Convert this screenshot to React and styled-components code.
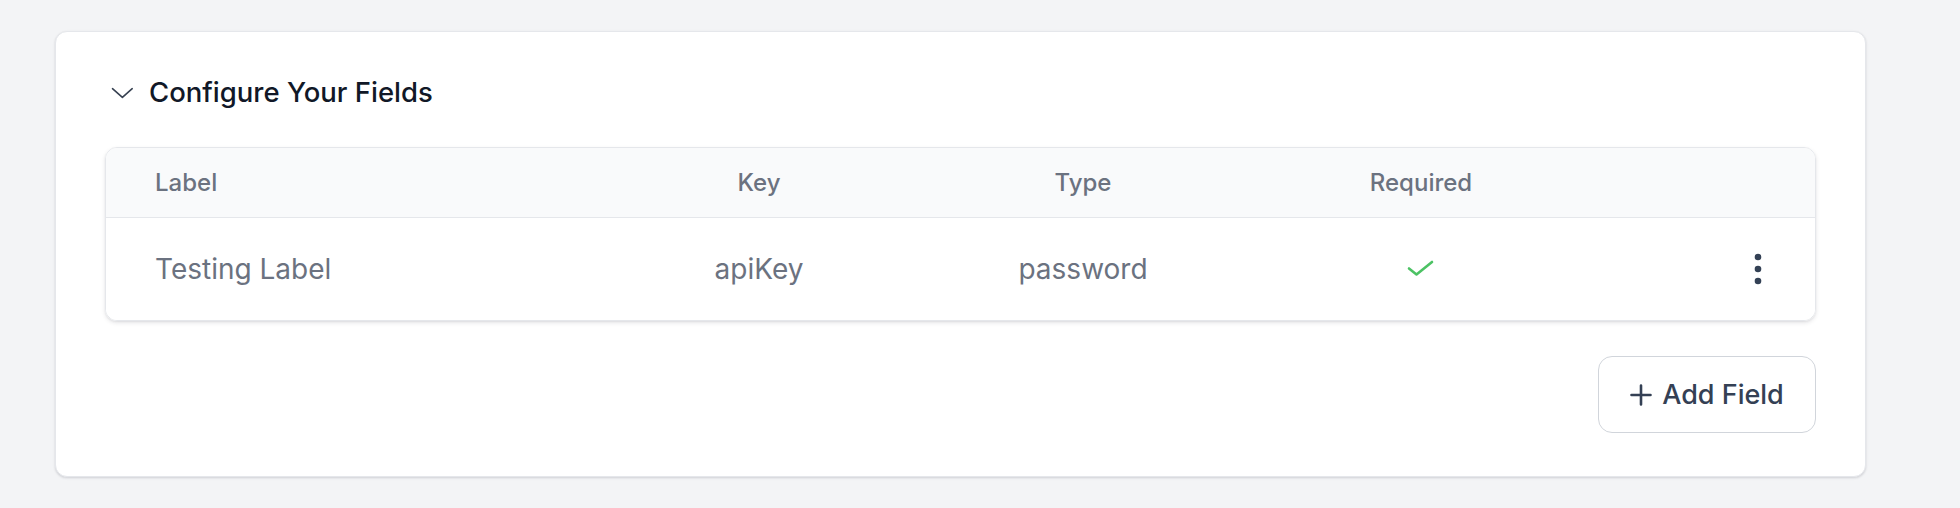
import styled, { createGlobalStyle } from "styled-components";

const GlobalStyle = createGlobalStyle`
  * { box-sizing: border-box; }
  body {
    margin: 0;
    background: #f3f4f6;
    font-family: Inter, "Noto Sans", sans-serif;
  }
`;

const Page = styled.div`
  padding: 31px 0 29px 55px;
`;

const Card = styled.section`
  width: 1811px;
  background: #ffffff;
  border: 1px solid #e5e7eb;
  border-radius: 12px;
  box-shadow: 0 1px 3px rgba(17, 24, 39, 0.1), 0 1px 2px rgba(17, 24, 39, 0.06);
  padding: 42px 49px 43px;
`;

const TitleRow = styled.div`
  display: flex;
  align-items: center;
  gap: 15px;
  padding-left: 5px;
  height: 36px;
`;

const Title = styled.h2`
  margin: 0;
  font-size: 27.5px;
  line-height: 36px;
  font-weight: 500;
  color: #111827;
`;

const Table = styled.div`
  margin-top: 37px;
  border: 1px solid #e5e7eb;
  border-radius: 12px;
  overflow: hidden;
  box-shadow: 0 2px 4px rgba(17, 24, 39, 0.1), 0 1px 2px rgba(17, 24, 39, 0.06);
`;

const Row = styled.div`
  display: grid;
  grid-template-columns: 491px 324px 324px 352px 1fr;
  align-items: center;
  height: ${(p) => (p.$head ? "70px" : "102px")};
  background: ${(p) => (p.$head ? "#f9fafb" : "#ffffff")};
  border-bottom: ${(p) => (p.$head ? "1px solid #e5e7eb" : "none")};
`;

const HeadCell = styled.div`
  font-size: 24px;
  font-weight: 500;
  color: #6b7280;
  text-align: ${(p) => p.$align || "center"};
  padding-left: ${(p) => (p.$align === "left" ? "49px" : "0")};
`;

const Cell = styled.div`
  font-size: 28px;
  font-weight: 400;
  color: #6b7280;
  display: flex;
  justify-content: ${(p) =>
    p.$align === "left" ? "flex-start" : p.$align === "right" ? "flex-end" : "center"};
  padding-left: ${(p) => (p.$align === "left" ? "49px" : "0")};
  padding-right: ${(p) => (p.$align === "right" ? "45px" : "0")};
`;

const MenuButton = styled.button`
  border: none;
  background: none;
  padding: 0;
  width: 24px;
  height: 40px;
  display: flex;
  cursor: pointer;
`;

const Footer = styled.div`
  display: flex;
  justify-content: flex-end;
  margin-top: 35px;
`;

const AddButton = styled.button`
  display: flex;
  align-items: center;
  justify-content: center;
  gap: 10px;
  width: 218px;
  height: 77px;
  padding: 0;
  white-space: nowrap;
  background: #ffffff;
  border: 1.5px solid #d1d5db;
  border-radius: 14px;
  font-family: Inter, "Noto Sans", sans-serif;
  font-size: 27px;
  font-weight: 500;
  color: #344054;
  cursor: pointer;
`;

const Chevron = () => (
  <svg width="24" height="24" viewBox="0 0 24 24" fill="none">
    <path d="M2.5 8.7 12.4 17.3 22.2 8.7" stroke="#374151" strokeWidth="1.6" strokeLinecap="round" strokeLinejoin="round" />
  </svg>
);

const Check = () => (
  <svg width="28" height="20" viewBox="0 0 28 20" fill="none">
    <path d="M2 9.5 9.5 15.5 25 3" stroke="#4cc264" strokeWidth="2.6" strokeLinecap="round" strokeLinejoin="round" />
  </svg>
);

const Dots = () => (
  <svg width="24" height="40" viewBox="0 0 24 40">
    <circle cx="12" cy="8" r="3.3" fill="#334155" />
    <circle cx="12" cy="20" r="3.3" fill="#334155" />
    <circle cx="12" cy="32" r="3.3" fill="#334155" />
  </svg>
);

const Plus = () => (
  <svg width="22" height="22" viewBox="0 0 22 22" fill="none">
    <path d="M11 1.5v19M1.5 11h19" stroke="#344054" strokeWidth="2.6" strokeLinecap="round" />
  </svg>
);

const fields = [{ label: "Testing Label", key: "apiKey", type: "password", required: true }];

export default function App() {
  return (
    <>
      <GlobalStyle />
      <Page>
        <Card>
          <TitleRow>
            <Chevron />
            <Title>Configure Your Fields</Title>
          </TitleRow>
          <Table>
            <Row $head>
              <HeadCell $align="left">Label</HeadCell>
              <HeadCell>Key</HeadCell>
              <HeadCell>Type</HeadCell>
              <HeadCell>Required</HeadCell>
              <HeadCell />
            </Row>
            {fields.map((f) => (
              <Row key={f.key}>
                <Cell $align="left">{f.label}</Cell>
                <Cell>{f.key}</Cell>
                <Cell>{f.type}</Cell>
                <Cell>{f.required && <Check />}</Cell>
                <Cell $align="right">
                  <MenuButton aria-label="More">
                    <Dots />
                  </MenuButton>
                </Cell>
              </Row>
            ))}
          </Table>
          <Footer>
            <AddButton>
              <Plus />
              Add Field
            </AddButton>
          </Footer>
        </Card>
      </Page>
    </>
  );
}
